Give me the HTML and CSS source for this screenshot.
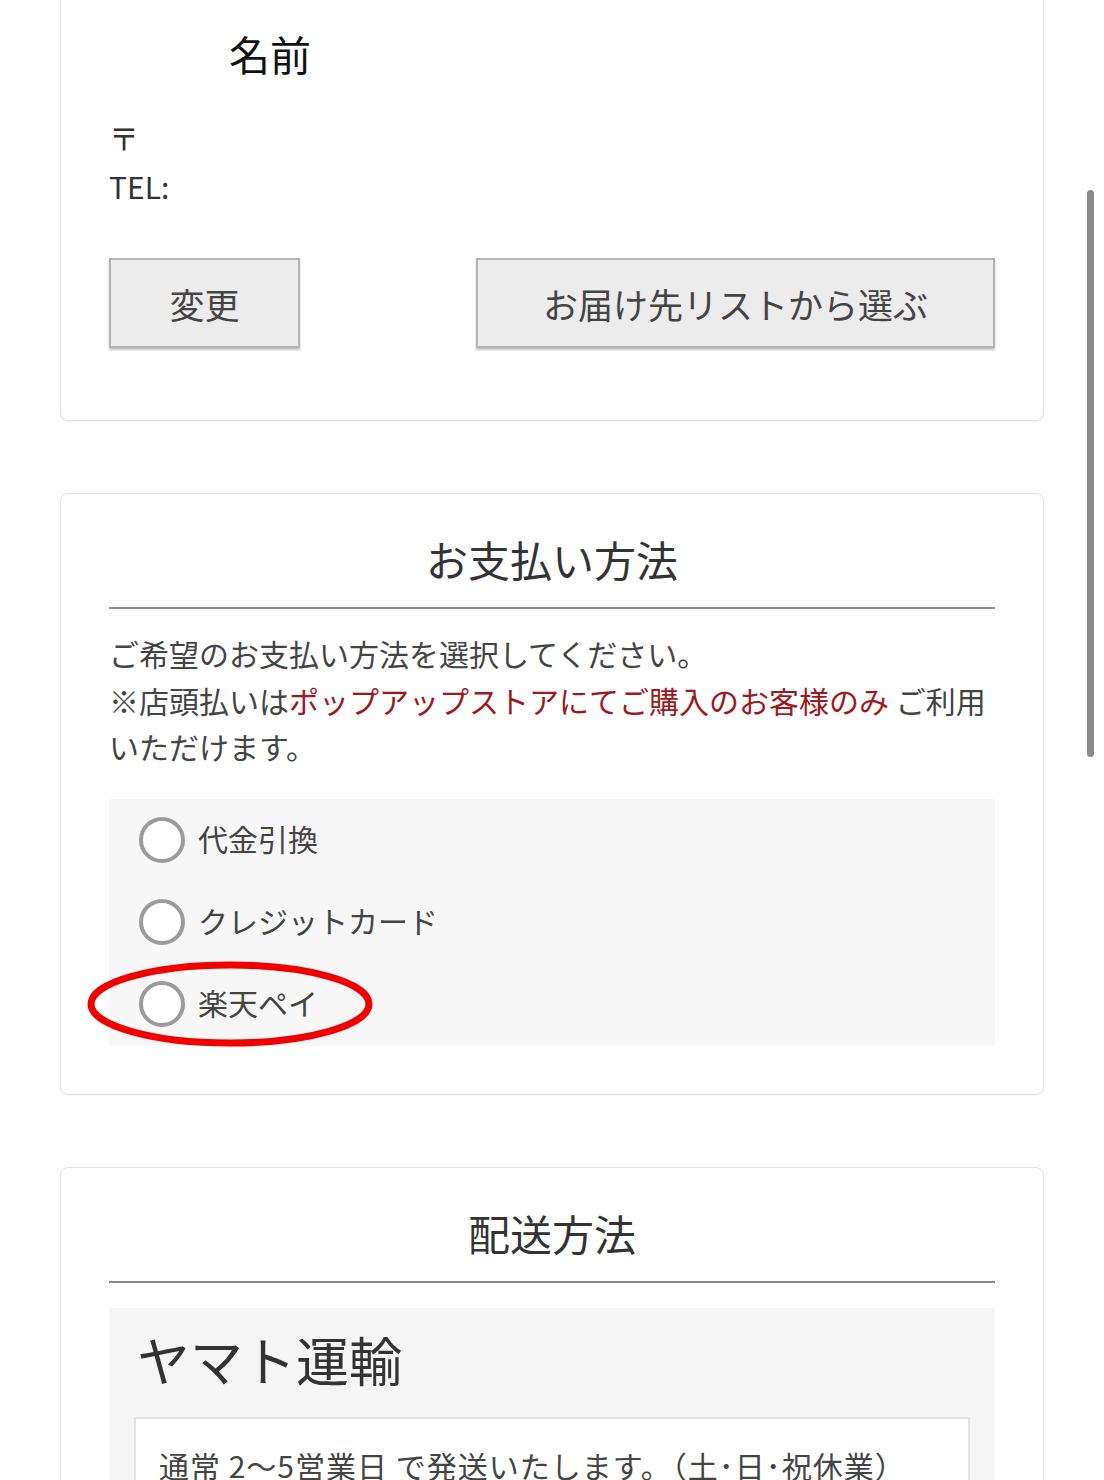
FILE: index.html
```html
<!DOCTYPE html>
<html lang="ja">
<head>
    <meta charset="UTF-8">
    <meta name="viewport" content="width=device-width, initial-scale=1.0">
    <title>ご注文手続き</title>
    <link rel="stylesheet" href="styles.css">
</head>
<body>
    <div class="page">
        <!-- お届け先 -->
        <section class="card card-cut">
            <div class="addr-name">名前</div>
            <div class="addr-lines">
                <div>〒</div>
                <div>TEL:</div>
            </div>
            <div class="addr-actions">
                <button class="btn btn-small">変更</button>
                <button class="btn btn-wide">お届け先リストから選ぶ</button>
            </div>
        </section>

        <!-- お支払い方法 -->
        <section class="card">
            <h2 class="card-title">お支払い方法</h2>
            <p class="note">
                ご希望のお支払い方法を選択してください。<br>
                ※店頭払いは<span class="note-em">ポップアップストアにてご購入のお客様のみ</span> ご利用いただけます。
            </p>
            <div class="choice-box">
                <label class="choice">
                    <span class="radio"></span>
                    <span class="choice-label">代金引換</span>
                </label>
                <label class="choice">
                    <span class="radio"></span>
                    <span class="choice-label">クレジットカード</span>
                </label>
                <label class="choice">
                    <span class="radio"></span>
                    <span class="choice-label">楽天ペイ</span>
                    <svg class="mark" width="286" height="86" viewBox="0 0 286 86">
                        <ellipse cx="143" cy="43" rx="139" ry="39" fill="none" stroke="#f20000" stroke-width="7"/>
                    </svg>
                </label>
            </div>
        </section>

        <!-- 配送方法 -->
        <section class="card">
            <h2 class="card-title">配送方法</h2>
            <div class="carrier">
                <div class="carrier-name">ヤマト運輸</div>
                <div class="carrier-info">通常 2〜5営業日 で発送いたします。（土･日･祝休業）</div>
            </div>
        </section>
    </div>

    <div class="scroll-thumb"></div>
</body>
</html>
```

FILE: styles.css
```css
* {
    box-sizing: border-box;
    margin: 0;
    padding: 0;
}

body {
    font-family: "Noto Sans CJK JP", "Noto Sans", sans-serif;
    background: #fff;
    color: #444;
    overflow: hidden;
}

.page {
    padding: 0 60px;
}

.card {
    background: #fff;
    border: 1px solid #e2e2e2;
    border-radius: 8px;
    padding: 33px 48px 48px;
    margin-bottom: 72px;
    box-shadow: 0 1px 2px rgba(0, 0, 0, 0.04);
}

.card-cut {
    border-top: none;
    border-top-left-radius: 0;
    border-top-right-radius: 0;
    padding-top: 23px;
    padding-bottom: 72px;
}

/* address */
.addr-name {
    font-size: 41px;
    line-height: 60px;
    color: #111;
    padding-left: 120px;
}

.addr-lines {
    margin-top: 30px;
    font-size: 30px;
    line-height: 49px;
    color: #333;
}

.addr-actions {
    display: flex;
    justify-content: space-between;
    margin-top: 47px;
}

.btn {
    height: 90px;
    font-family: inherit;
    font-size: 35px;
    color: #444;
    background: #ececec;
    border: 2px solid #b4b4b4;
    box-shadow: 0 2px 2px rgba(0, 0, 0, 0.25);
    cursor: pointer;
}

.btn-small {
    width: 191px;
}

.btn-wide {
    width: 519px;
}

/* sections */
.card-title {
    font-size: 42px;
    font-weight: 400;
    line-height: 64px;
    color: #333;
    text-align: center;
    padding-bottom: 16px;
    border-bottom: 2px solid #8c8c8c;
}

.note {
    margin-top: 21px;
    font-size: 30px;
    line-height: 46.5px;
    color: #444;
}

.note-em {
    color: #a0181d;
}

.choice-box {
    margin-top: 29px;
    background: #f7f7f7;
    padding: 0 0 1px 30px;
}

.choice {
    position: relative;
    display: flex;
    align-items: center;
    gap: 13px;
    height: 82px;
    font-size: 30px;
    color: #444;
    cursor: pointer;
}

.choice-label {
    margin-top: -4px;
}

.radio {
    width: 46px;
    height: 46px;
    border: 4px solid #9b9b9b;
    border-radius: 50%;
    background: #fff;
    flex-shrink: 0;
}

.mark {
    position: absolute;
    left: -52px;
    top: -2px;
}

/* delivery */
.carrier {
    margin-top: 25px;
    background: #f5f5f5;
    padding: 16px 25px 0;
}

.carrier-name {
    font-size: 53px;
    line-height: 70px;
    color: #333;
    padding-left: 3px;
    margin-bottom: 23px;
}

.carrier-info {
    background: #fff;
    border: 2px solid #e4e4e4;
    padding: 24px 23px;
    font-size: 30px;
    line-height: 44px;
    letter-spacing: 1px;
    color: #444;
}

.scroll-thumb {
    position: fixed;
    left: 1087px;
    top: 190px;
    width: 7px;
    height: 567px;
    border-radius: 4px;
    background: #8a8a8a;
}
```
